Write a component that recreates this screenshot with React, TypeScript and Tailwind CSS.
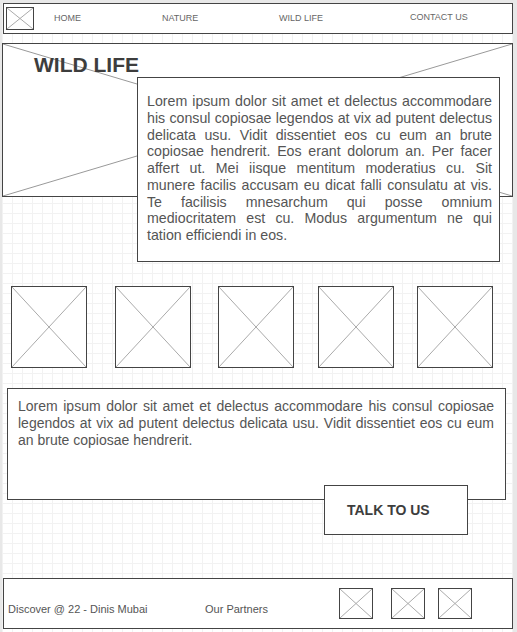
import React from "react";

function Cross({ color = "#aaa" }: { color?: string }) {
  return (
    <svg
      className="absolute inset-0 h-full w-full"
      viewBox="0 0 100 100"
      preserveAspectRatio="none"
    >
      <line x1="0" y1="0" x2="100" y2="100" stroke={color} strokeWidth="1" vectorEffect="non-scaling-stroke" />
      <line x1="0" y1="100" x2="100" y2="0" stroke={color} strokeWidth="1" vectorEffect="non-scaling-stroke" />
    </svg>
  );
}

function Placeholder({ className }: { className: string }) {
  return (
    <div className={`relative shrink-0 border border-[#444] bg-white ${className}`}>
      <Cross />
    </div>
  );
}

const navItems = [
  { label: "HOME", cls: "w-[108px]" },
  { label: "NATURE", cls: "w-[117px]" },
  { label: "WILD LIFE", cls: "w-[131px]" },
  { label: "CONTACT US", cls: "w-[90px] -mt-[2px]" },
];

const thumbs = ["ml-[9px]", "ml-[28px]", "ml-[27px]", "ml-[24px]", "ml-[23px]"];

export default function App() {
  return (
    <div className="h-[632px] w-[517px] overflow-hidden bg-[#e8e8e8] pl-[2px] pt-[3px] font-['Liberation_Sans',Arial,sans-serif] text-[#555]">
      <div className="flex h-[629px] w-[511px] flex-col bg-white bg-[linear-gradient(to_right,#f2f2f2_1px,transparent_1px),linear-gradient(to_bottom,#f2f2f2_1px,transparent_1px)] bg-[size:10px_10px]">
        {/* nav */}
        <nav className="ml-[1px] flex h-[31px] w-[510px] shrink-0 items-center border border-[#444] bg-white">
          <Placeholder className="ml-[2px] h-[23px] w-[28px]" />
          <div className="ml-[20px] flex items-center text-[9px] text-[#666]">
            {navItems.map((n) => (
              <span key={n.label} className={`${n.cls} whitespace-nowrap`}>
                {n.label}
              </span>
            ))}
          </div>
        </nav>

        {/* hero */}
        <section className="relative mt-[9px] h-[154px] w-[511px] shrink-0 border border-[#444] bg-white">
          <Cross color="#999" />
          <h1 className="relative pl-[31px] pt-[10px] text-[21px] font-bold leading-[21px] text-[#3d3d3d]">
            WILD LIFE
          </h1>
        </section>
        <div className="relative z-10 -mt-[120px] ml-[135px] h-[185px] w-[363px] shrink-0 border border-[#444] bg-white pl-[9px] pr-[7px] pt-[15px]">
          <p className="text-justify text-[14.2px] leading-[16.75px]">
            Lorem ipsum dolor sit amet et delectus accommodare his consul copiosae legendos at vix ad putent delectus
            delicata usu. Vidit dissentiet eos cu eum an brute copiosae hendrerit. Eos erant dolorum an. Per facer
            affert ut. Mei iisque mentitum moderatius cu. Sit munere facilis accusam eu dicat falli consulatu at vis.
            Te facilisis mnesarchum qui posse omnium mediocritatem est cu. Modus argumentum ne qui tation efficiendi in
            eos.
          </p>
        </div>

        {/* thumbnails */}
        <div className="mt-[24px] flex shrink-0">
          {thumbs.map((m, i) => (
            <Placeholder key={i} className={`${m} h-[82px] w-[76px]`} />
          ))}
        </div>

        {/* about */}
        <div className="ml-[5px] mt-[20px] h-[112px] w-[499px] shrink-0 border border-[#444] bg-white pl-[10px] pr-[11px] pt-[9px]">
          <p className="text-justify text-[14px] leading-[17px]">
            Lorem ipsum dolor sit amet et delectus accommodare his consul copiosae legendos at vix ad putent delectus
            delicata usu. Vidit dissentiet eos cu eum an brute copiosae hendrerit.
          </p>
        </div>
        <button className="relative z-10 -mt-[15px] ml-[322px] flex h-[50px] w-[144px] shrink-0 items-center border border-[#444] bg-white pl-[22px] text-[14px] font-bold text-[#3d3d3d]">
          TALK TO US
        </button>

        {/* footer */}
        <footer className="ml-[1px] mt-[43px] flex h-[51px] w-[510px] shrink-0 items-center border border-[#444] bg-white pl-[4px] text-[11px]">
          <span className="mt-[11px] w-[197px] whitespace-nowrap">Discover @ 22 - Dinis Mubai</span>
          <span className="mt-[11px] w-[134px] whitespace-nowrap">Our Partners</span>
          <Placeholder className="-mt-[1px] h-[31px] w-[34px]" />
          <Placeholder className="-mt-[1px] ml-[18px] h-[31px] w-[34px]" />
          <Placeholder className="-mt-[1px] ml-[13px] h-[31px] w-[34px]" />
        </footer>
      </div>
    </div>
  );
}
